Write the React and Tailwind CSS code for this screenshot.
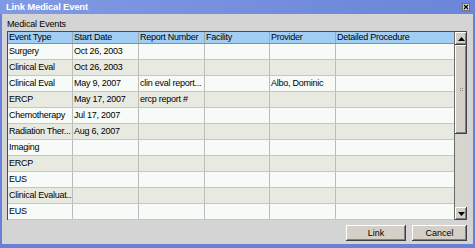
import React from 'react';

const columns = [
  { label: 'Event Type', w: 'w-[65px]' },
  { label: 'Start Date', w: 'w-[66px]' },
  { label: 'Report Number', w: 'w-[66px]' },
  { label: 'Facility', w: 'w-[65px]' },
  { label: 'Provider', w: 'w-[66px]' },
  { label: 'Detailed Procedure', w: 'w-[118px]' },
];

const rows = [
  ['Surgery', 'Oct 26, 2003', '', '', '', ''],
  ['Clinical Eval', 'Oct 26, 2003', '', '', '', ''],
  ['Clinical Eval', 'May 9, 2007', 'clin eval report...', '', 'Albo, Dominic', ''],
  ['ERCP', 'May 17, 2007', 'ercp report #', '', '', ''],
  ['Chemotherapy', 'Jul 17, 2007', '', '', '', ''],
  ['Radiation Ther...', 'Aug 6, 2007', '', '', '', ''],
  ['Imaging', '', '', '', '', ''],
  ['ERCP', '', '', '', '', ''],
  ['EUS', '', '', '', '', ''],
  ['Clinical Evaluat...', '', '', '', '', ''],
  ['EUS', '', '', '', '', ''],
];

const raised =
  'bg-[#d4d0c8] shadow-[inset_-1px_-1px_#404040,inset_1px_1px_#ffffff,inset_-2px_-2px_#808080]';

const Arrow = ({ up }) => (
  <div className={`h-[13px] flex items-center justify-center ${raised}`}>
    <svg width="7" height="4" viewBox="0 0 7 4">
      {up ? <polygon points="3.5,0 7,4 0,4" fill="#000" /> : <polygon points="0,0 7,0 3.5,4" fill="#000" />}
    </svg>
  </div>
);

const App = () => {
  return (
    <div
      className="w-[475px] h-[248px] flex flex-col bg-[#6a80d8] text-black"
      style={{ fontFamily: '"Liberation Sans", Arial, sans-serif' }}
    >
      {/* title bar */}
      <div className="h-[14px] flex items-center justify-between pl-[6px] pr-[5px] bg-gradient-to-r from-[#809ae4] to-[#6b85d8]">
        <span className="text-[9.5px] leading-[12px] font-bold text-white tracking-[-0.2px]">Link Medical Event</span>
        <div className="w-[8px] h-[8px] flex items-center justify-center bg-[#d8d8d4] border border-[#707070]">
          <svg width="6" height="6" viewBox="0 0 6 6">
            <path d="M1 1 L5 5 M5 1 L1 5" stroke="#000" strokeWidth="1.2" />
          </svg>
        </div>
      </div>

      {/* body */}
      <div className="flex-1 mx-[2px] mb-[4px] bg-[#d4d4d4] flex flex-col pl-[5px] pr-[6px]">
        <div className="h-[17px] pt-[5px] text-[9px] leading-[10px] tracking-[-0.15px]">Medical Events</div>

        <div className="flex h-[189px] border-t border-l border-[#4a4a4a] text-[9px] tracking-[-0.25px]">
          <div className="flex flex-col">
            <div className="flex h-[12px] bg-[#a2cef5] border-b border-[#8c8c8c]">
              {columns.map((c, i) => (
                <div
                  key={c.label}
                  className={`${c.w} pl-[1px] leading-[11px] whitespace-nowrap overflow-hidden ${
                    i < columns.length - 1 ? 'border-r border-[#9aa8b8]' : ''
                  }`}
                >
                  {c.label}
                </div>
              ))}
            </div>
            {rows.map((r, ri) => (
              <div
                key={ri}
                className={`flex h-[16px] border-b border-[#c6c6c6] ${ri % 2 === 0 ? 'bg-[#f7fbf7]' : 'bg-[#e8e9e1]'}`}
              >
                {r.map((cell, ci) => (
                  <div
                    key={ci}
                    className={`${columns[ci].w} pl-[1px] leading-[15px] whitespace-nowrap overflow-hidden ${
                      ci < columns.length - 1 ? 'border-r border-[#bcbcbc]' : ''
                    }`}
                  >
                    {cell}
                  </div>
                ))}
              </div>
            ))}
          </div>

          {/* scrollbar */}
          <div className="w-[13px] flex flex-col bg-[#d6d6ce] border-l border-[#6a6a6a]">
            <Arrow up />
            <div className={`h-[89px] flex items-center justify-center ${raised}`}>
              <div className="grid grid-cols-2 gap-[1px]">
                <span className="w-[1px] h-[1px] bg-[#8a8a8a]" />
                <span className="w-[1px] h-[1px] bg-[#8a8a8a]" />
                <span className="w-[1px] h-[1px] bg-[#8a8a8a]" />
                <span className="w-[1px] h-[1px] bg-[#8a8a8a]" />
              </div>
            </div>
            <div className="flex-1" />
            <Arrow />
          </div>
        </div>

        <div className="flex justify-end gap-[6px] pt-[5px] text-[9px]">
          <button className={`w-[60px] h-[16px] leading-[16px] text-center ${raised}`}>Link</button>
          <button className={`w-[55px] h-[16px] leading-[16px] text-center ${raised}`}>Cancel</button>
        </div>
      </div>
    </div>
  );
};

export default App;
